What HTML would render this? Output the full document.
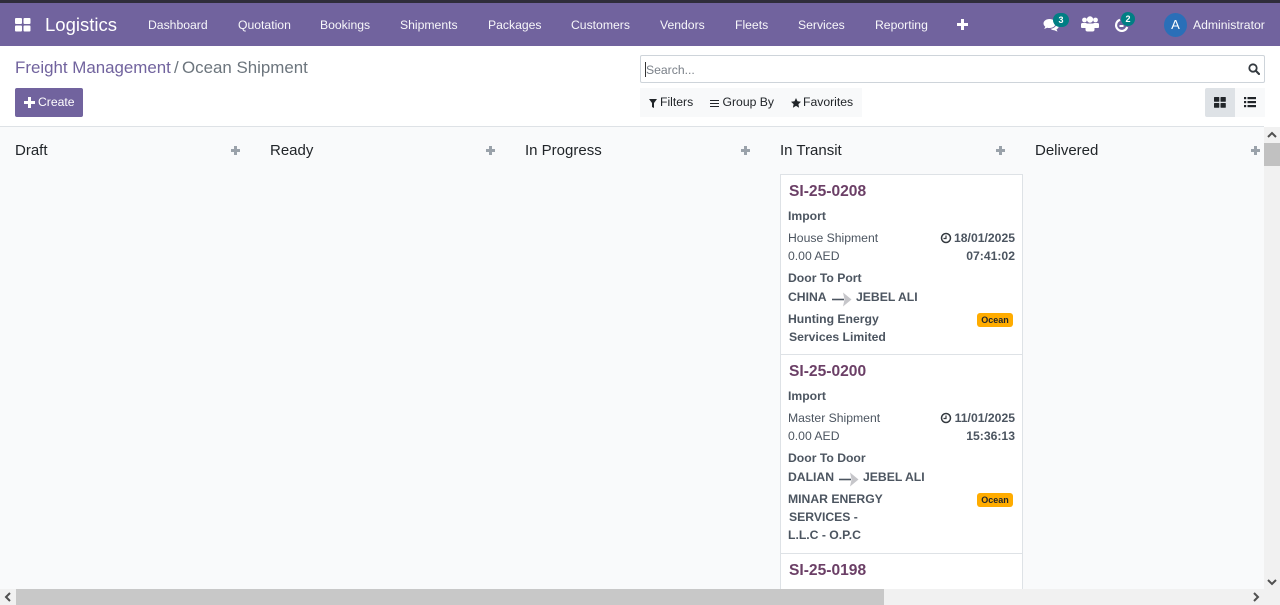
<!DOCTYPE html>
<html lang="en"><head><meta charset="utf-8"><title>Ocean Shipment</title>
<style>
html,body{margin:0;padding:0;width:1280px;height:605px;overflow:hidden;background:#fff;font-family:"Liberation Sans",Arial,sans-serif;}
#p{position:relative;width:1280px;height:605px;overflow:hidden}
.a{position:absolute;white-space:nowrap}
.n{color:#fff;font-size:12.2px;top:10px;line-height:30px;height:30px;opacity:.95}
.h{font-size:15px;color:#212529;top:140px;line-height:20px}
.pl{position:absolute;top:146px;width:9px;height:9px;background:
 linear-gradient(#9aa2aa,#9aa2aa) 0 3px/9px 3px no-repeat,linear-gradient(#9aa2aa,#9aa2aa) 3px 0/3px 9px no-repeat}
.c{position:absolute;left:780px;width:243px;background:#fff;border:1px solid #dee2e6;box-sizing:border-box}
.t{font-size:12.2px;color:#4c5560;line-height:18px;position:absolute;white-space:nowrap}
.b{font-weight:bold}
.r{right:7px;text-align:right}
.ti{font-size:15.6px;font-weight:bold;color:#6b3f66;position:absolute;left:8px;line-height:20px;white-space:nowrap}
.o{position:absolute;left:196px;width:36px;height:14px;background:#ffac00;border-radius:3px;color:#212529;font-size:9px;font-weight:bold;line-height:14px;text-align:center}
</style></head><body><div id="p">
<div class="a" style="left:0;top:0;width:1280px;height:3px;background:#2f2d3a"></div>
<div class="a" style="left:0;top:3px;width:1280px;height:43px;background:#71639e"></div>
<svg class="a" style="left:15px;top:18px" width="16" height="14" viewBox="0 0 16 14"><g fill="#fff"><rect x="0" y="0" width="7" height="6" rx="1"/><rect x="8.500" y="0" width="7" height="6" rx="1"/><rect x="0" y="7.500" width="7" height="6" rx="1"/><rect x="8.500" y="7.500" width="7" height="6" rx="1"/></g></svg>
<div class="a" style="left:45px;top:10px;line-height:30px;font-size:18.500px;color:#fff">Logistics</div>
<div class="a n" style="left:148px">Dashboard</div>
<div class="a n" style="left:238px">Quotation</div>
<div class="a n" style="left:320px">Bookings</div>
<div class="a n" style="left:400px">Shipments</div>
<div class="a n" style="left:488px">Packages</div>
<div class="a n" style="left:571px">Customers</div>
<div class="a n" style="left:660px">Vendors</div>
<div class="a n" style="left:735px">Fleets</div>
<div class="a n" style="left:798px">Services</div>
<div class="a n" style="left:875px">Reporting</div>
<svg class="a" style="left:957px;top:19px" width="11" height="11" viewBox="0 0 11 11"><path d="M4 0h3v4h4v3H7v4H4V7H0V4h4z" fill="#fff"/></svg>
<svg class="a" style="left:1043px;top:18px" width="17" height="15" viewBox="0 0 17 15"><path d="M6.500 1C3 1 .5 3 .5 5.500c0 1.300.7 2.400 1.800 3.200L1.200 11l3-1.300c.7.200 1.500.3 2.300.3 3.500 0 6-2 6-4.500S10 1 6.500 1z" fill="#fff"/><path d="M13.500 5.500c0 3-2.600 5-6 5.300 1 1 2.300 1.500 3.800 1.500l3.200 1.300-1-2.300c1.300-.7 2.300-1.800 2.300-3.200 0-1-.6-1.900-1.600-2.600z" fill="#fff"/></svg>
<div class="a" style="left:1053px;top:13px;width:16px;height:14px;border-radius:7px;background:#017e84;color:#fff;font-size:9px;font-weight:bold;line-height:14px;text-align:center">3</div>
<svg class="a" style="left:1081px;top:16px" width="18" height="16" viewBox="0 0 18 16"><g fill="#fff"><circle cx="3.500" cy="4" r="2.400"/><circle cx="14.500" cy="4" r="2.400"/><circle cx="9" cy="3.500" r="3.200"/><path d="M0 8.500Q0 7 1.500 7h4v5H1Q0 12 0 11zM18 8.500Q18 7 16.500 7h-4v5H17q1 0 1-1z"/><path d="M4.500 9Q4.500 7.500 6 7.500h6q1.500 0 1.500 1.500v4.500q0 2-2 2h-5q-2 0-2-2z"/></g></svg>
<svg class="a" style="left:1114px;top:18px" width="15" height="15" viewBox="0 0 15 15"><path d="M6 1.800A5.700 5.700 0 1 0 13.200 9" fill="none" stroke="#fff" stroke-width="2.200"/><rect x="5.500" y="7" width="4" height="2" fill="#fff"/></svg>
<div class="a" style="left:1121px;top:12px;width:14px;height:14px;border-radius:7px;background:#017e84;color:#fff;font-size:9px;font-weight:bold;line-height:14px;text-align:center">2</div>
<div class="a" style="left:1164px;top:13px;width:23px;height:24px;border-radius:50%;background:#2a6fb8;color:#fff;font-size:13px;line-height:24px;text-align:center">A</div>
<div class="a n" style="left:1193px">Administrator</div>

<div class="a" style="left:15px;top:58px;line-height:20px;font-size:16.900px;color:#71639e">Freight Management</div>
<div class="a" style="left:174px;top:58px;line-height:20px;font-size:16.900px;color:#6c757d">/</div>
<div class="a" style="left:182px;top:58px;line-height:20px;font-size:16.900px;color:#6c757d">Ocean Shipment</div>
<div class="a" style="left:15px;top:88px;width:68px;height:29px;background:#71639e;border-radius:2px"></div>
<svg class="a" style="left:24px;top:97px" width="11" height="11" viewBox="0 0 11 11"><path d="M4 0h3v4h4v3H7v4H4V7H0V4h4z" fill="#fff"/></svg>
<div class="a" style="left:38px;top:93px;line-height:18px;font-size:12.200px;color:#fff">Create</div>

<div class="a" style="left:640px;top:55px;width:625px;height:28px;border:1px solid #ced4da;border-radius:2px;box-sizing:border-box;background:#fff"></div>
<div class="a" style="left:645px;top:62px;width:1px;height:15px;background:#333"></div>
<div class="a" style="left:646px;top:61px;line-height:18px;font-size:12.200px;color:#7a8088">Search...</div>
<svg class="a" style="left:1248px;top:63px" width="12" height="12" viewBox="0 0 12 12"><circle cx="5" cy="5" r="3.700" fill="none" stroke="#343a40" stroke-width="1.800"/><path d="M7.800 7.800l3.200 3.200" stroke="#343a40" stroke-width="2.100" stroke-linecap="round"/></svg>

<div class="a" style="left:640px;top:88px;width:222px;height:29px;background:#f8f9fa"></div>
<svg class="a" style="left:649px;top:99px" width="8" height="9" viewBox="0 0 8 9"><path d="M0 0h8L5 4v5L3 8V4z" fill="#212529"/></svg>
<div class="a" style="left:660px;top:93px;line-height:18px;font-size:12.200px;color:#212529">Filters</div>
<svg class="a" style="left:710px;top:100px" width="9" height="8" viewBox="0 0 9 8"><path d="M0 .5h9M0 3.500h9M0 6.500h9" stroke="#212529" stroke-width="1.100"/></svg>
<div class="a" style="left:722.500px;top:93px;line-height:18px;font-size:12.200px;color:#212529">Group By</div>
<svg class="a" style="left:791px;top:98px" width="10" height="10" viewBox="0 0 10 10"><path d="M5 0l1.500 3.300 3.500.4-2.600 2.400.7 3.600L5 7.900 1.900 9.700l.7-3.600L0 3.700l3.500-.4z" fill="#212529"/></svg>
<div class="a" style="left:803px;top:93px;line-height:18px;font-size:12.200px;color:#212529">Favorites</div>
<div class="a" style="left:1205px;top:88px;width:30px;height:29px;background:#dee2e6;border-radius:2px 0 0 2px"></div>
<div class="a" style="left:1235px;top:88px;width:30px;height:29px;background:#f8f9fa"></div>
<svg class="a" style="left:1214px;top:97px" width="12" height="11" viewBox="0 0 12 11"><g fill="#212529"><rect width="5.300" height="4.700" rx=".6"/><rect x="6.500" width="5.300" height="4.700" rx=".6"/><rect y="6" width="5.300" height="4.700" rx=".6"/><rect x="6.500" y="6" width="5.300" height="4.700" rx=".6"/></g></svg>
<svg class="a" style="left:1244px;top:97px" width="12" height="11" viewBox="0 0 12 11"><g fill="#212529"><rect width="2.200" height="2.200"/><rect y="4" width="2.200" height="2.200"/><rect y="8" width="2.200" height="2.200"/><rect x="3.500" width="8.500" height="2.200"/><rect x="3.500" y="4" width="8.500" height="2.200"/><rect x="3.500" y="8" width="8.500" height="2.200"/></g></svg>

<div class="a" style="left:0;top:126px;width:1264px;height:463px;background:#f9fafb;border-top:1px solid #dee2e6;box-sizing:border-box"></div>
<div class="a h" style="left:15px;top:141px">Draft</div><div class="pl" style="left:231px"></div>
<div class="a h" style="left:270px;top:141px">Ready</div><div class="pl" style="left:486px"></div>
<div class="a h" style="left:525px;top:141px">In Progress</div><div class="pl" style="left:741px"></div>
<div class="a h" style="left:780px;top:141px">In Transit</div><div class="pl" style="left:996px"></div>
<div class="a h" style="left:1035px;top:141px">Delivered</div><div class="pl" style="left:1251px"></div>

<div class="c" style="top:174px;height:181px">
<div class="ti" style="top:7px">SI-25-0208</div>
<div class="t b" style="left:7px;top:32px">Import</div>
<div class="t" style="left:7px;top:54px">House Shipment</div>
<div class="t b r" style="top:54px">18/01/2025</div>
<svg class="a" style="left:159px;top:57px" width="12" height="12" viewBox="0 0 12 12"><circle cx="6" cy="6" r="4.500" fill="none" stroke="#343a40" stroke-width="1.500"/><path d="M6 3.500V6.500H3.500" fill="none" stroke="#343a40" stroke-width="1.200"/></svg>
<div class="t" style="left:7px;top:72px">0.00 AED</div>
<div class="t b r" style="top:72px">07:41:02</div>
<div class="t b" style="left:7px;top:94px">Door To Port</div>
<div class="t b" style="left:7px;top:113px">CHINA</div>
<svg class="a" style="left:51px;top:117px" width="21" height="15" viewBox="0 0 21 15"><path d="M0 7.500h12" stroke="#4c5560" stroke-width="1.600"/><path d="M11 0.500l8.500 7-8.500 7 1.500-7z" fill="#c6c6ca"/></svg>
<div class="t b" style="left:75px;top:113px">JEBEL ALI</div>
<div class="t b" style="left:7px;top:135px">Hunting Energy</div>
<div class="t b" style="left:8px;top:153px">Services Limited</div>
<div class="o" style="top:138px">Ocean</div>
</div>

<div class="c" style="top:354px;height:200px">
<div class="ti" style="top:7px">SI-25-0200</div>
<div class="t b" style="left:7px;top:32px">Import</div>
<div class="t" style="left:7px;top:54px">Master Shipment</div>
<div class="t b r" style="top:54px">11/01/2025</div>
<svg class="a" style="left:159px;top:57px" width="12" height="12" viewBox="0 0 12 12"><circle cx="6" cy="6" r="4.500" fill="none" stroke="#343a40" stroke-width="1.500"/><path d="M6 3.500V6.500H3.500" fill="none" stroke="#343a40" stroke-width="1.200"/></svg>
<div class="t" style="left:7px;top:72px">0.00 AED</div>
<div class="t b r" style="top:72px">15:36:13</div>
<div class="t b" style="left:7px;top:94px">Door To Door</div>
<div class="t b" style="left:7px;top:113px">DALIAN</div>
<svg class="a" style="left:58px;top:117px" width="21" height="15" viewBox="0 0 21 15"><path d="M0 7.500h12" stroke="#4c5560" stroke-width="1.600"/><path d="M11 0.500l8.500 7-8.500 7 1.500-7z" fill="#c6c6ca"/></svg>
<div class="t b" style="left:82px;top:113px">JEBEL ALI</div>
<div class="t b" style="left:7px;top:135px">MINAR ENERGY</div>
<div class="t b" style="left:8px;top:153px">SERVICES -</div>
<div class="t b" style="left:7px;top:171px">L.L.C - O.P.C</div>
<div class="o" style="top:138px">Ocean</div>
</div>

<div class="c" style="top:553px;height:60px;border-bottom:0">
<div class="ti" style="top:7px">SI-25-0198</div>
</div>

<div class="a" style="left:1264px;top:127px;width:16px;height:478px;background:#f1f1f1"></div>
<div class="a" style="left:1264px;top:143px;width:16px;height:23px;background:#c1c1c1"></div>
<svg class="a" style="left:1264px;top:127px" width="16" height="16" viewBox="0 0 16 16"><path d="M4 10l4-4 4 4" fill="none" stroke="#505050" stroke-width="2"/></svg>
<svg class="a" style="left:1264px;top:574px" width="16" height="16" viewBox="0 0 16 16"><path d="M4 6l4 4 4-4" fill="none" stroke="#505050" stroke-width="2"/></svg>
<div class="a" style="left:0;top:589px;width:1264px;height:16px;background:#f1f1f1"></div>
<div class="a" style="left:16px;top:589px;width:868px;height:16px;background:#c8c8c8"></div>
<svg class="a" style="left:0;top:589px" width="16" height="16" viewBox="0 0 16 16"><path d="M10 4L6 8l4 4" fill="none" stroke="#505050" stroke-width="2"/></svg>
<svg class="a" style="left:1248px;top:589px" width="16" height="16" viewBox="0 0 16 16"><path d="M6 4l4 4-4 4" fill="none" stroke="#505050" stroke-width="2"/></svg>
<div class="a" style="left:1264px;top:589px;width:16px;height:16px;background:#f1f1f1"></div>
</div></body></html>
